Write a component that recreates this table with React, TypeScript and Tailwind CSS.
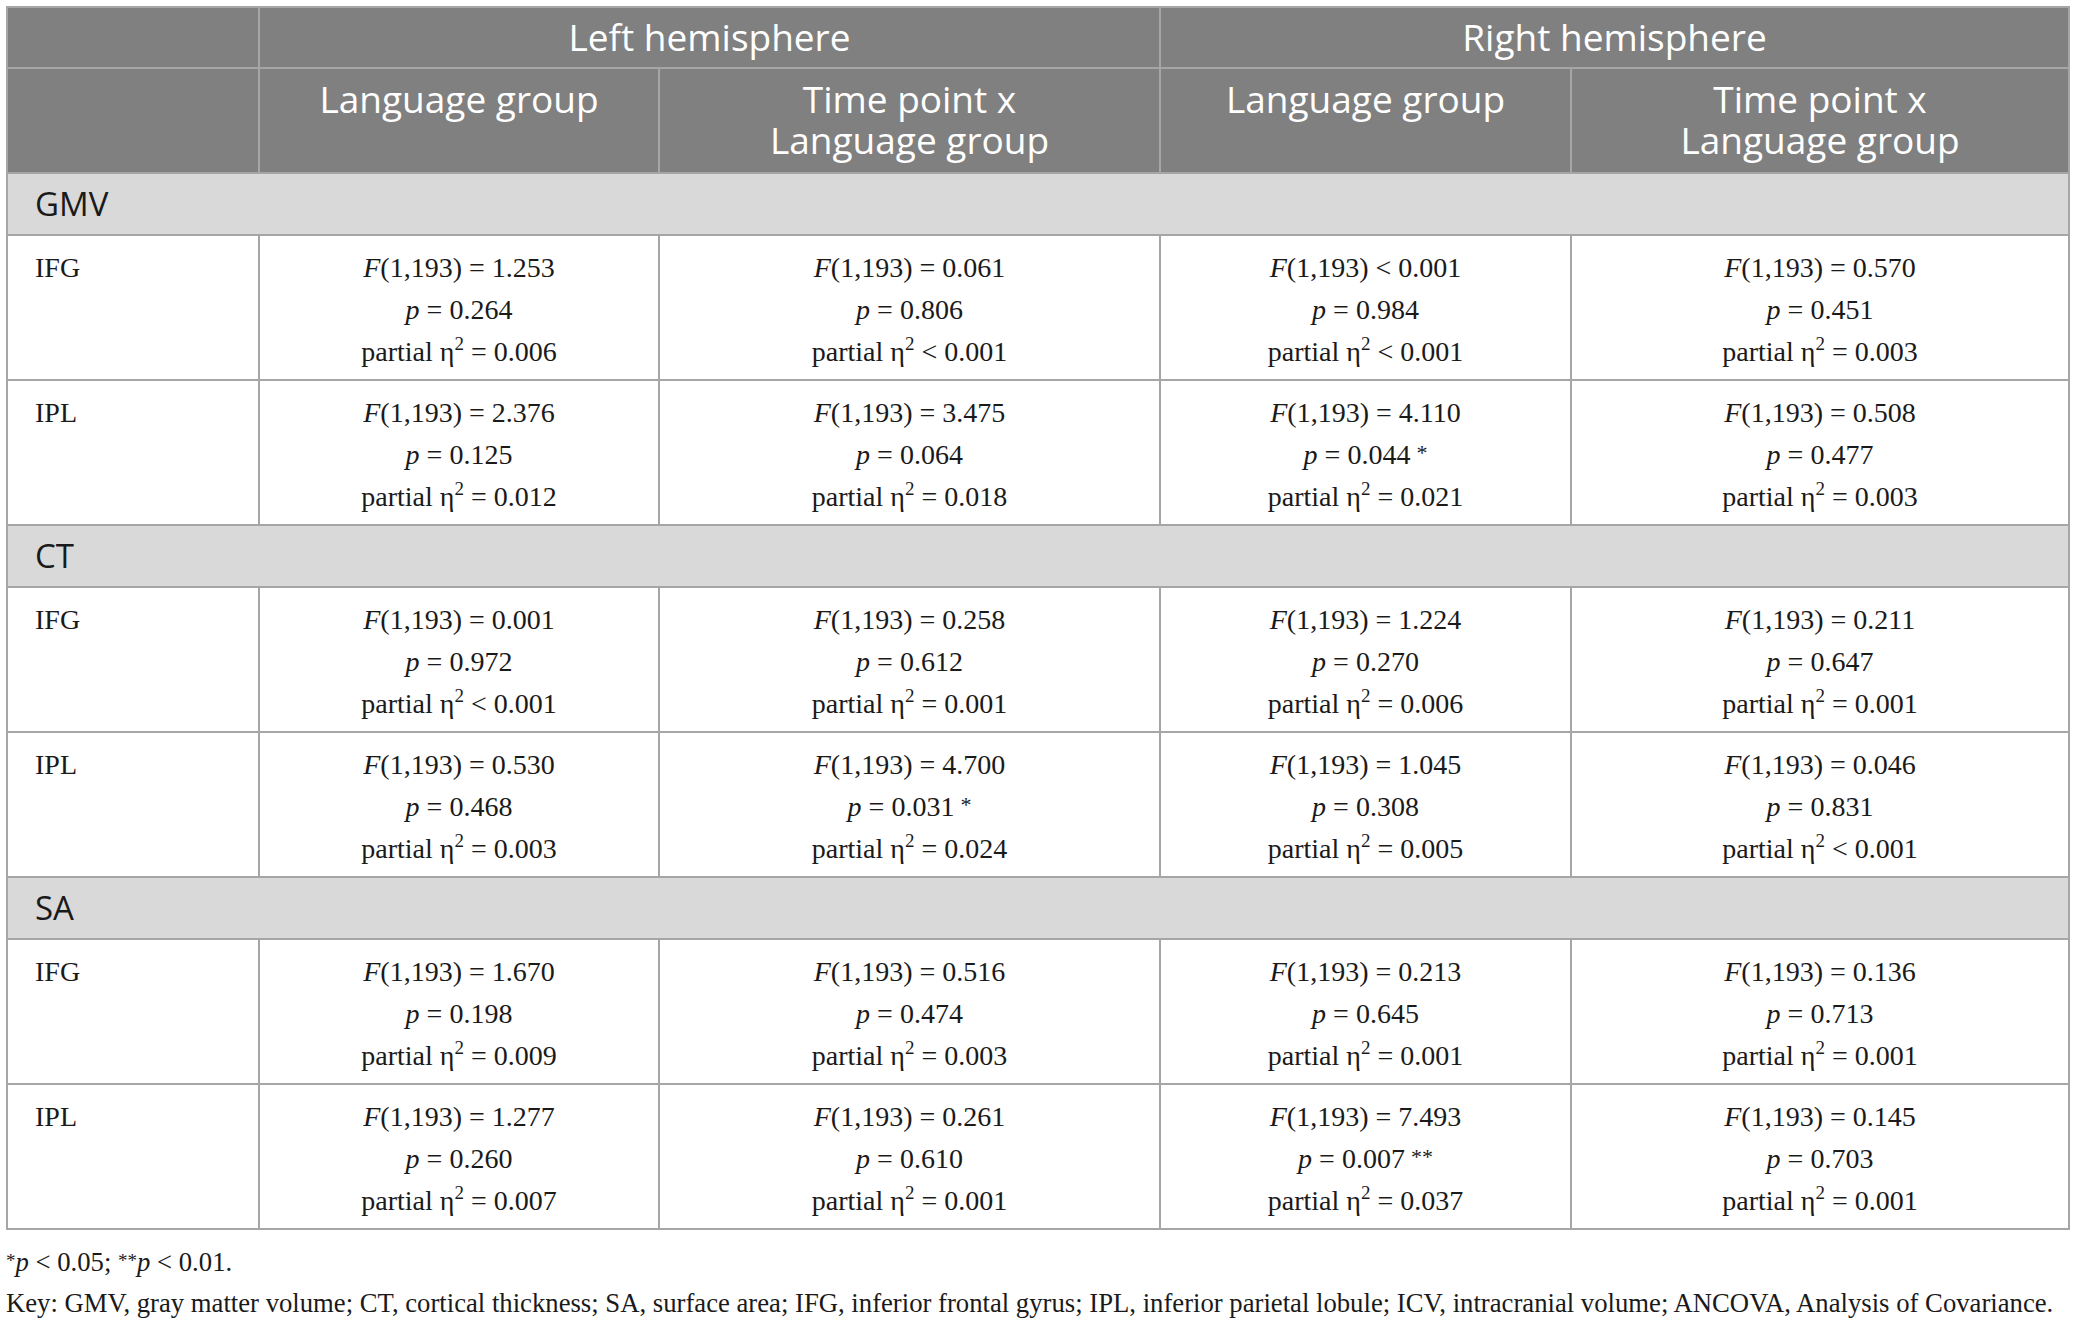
import React from "react";

type Cell = { f: string; p: string; sig?: string; eta: string };

interface Row {
  label: string;
  cells: Cell[];
}

interface Group {
  name: string;
  rows: Row[];
}

const c = (f: string, p: string, eta: string, sig?: string): Cell => ({ f, p, eta, sig });

const groups: Group[] = [
  {
    name: "GMV",
    rows: [
      {
        label: "IFG",
        cells: [
          c("= 1.253", "= 0.264", "= 0.006"),
          c("= 0.061", "= 0.806", "< 0.001"),
          c("< 0.001", "= 0.984", "< 0.001"),
          c("= 0.570", "= 0.451", "= 0.003"),
        ],
      },
      {
        label: "IPL",
        cells: [
          c("= 2.376", "= 0.125", "= 0.012"),
          c("= 3.475", "= 0.064", "= 0.018"),
          c("= 4.110", "= 0.044", "= 0.021", "*"),
          c("= 0.508", "= 0.477", "= 0.003"),
        ],
      },
    ],
  },
  {
    name: "CT",
    rows: [
      {
        label: "IFG",
        cells: [
          c("= 0.001", "= 0.972", "< 0.001"),
          c("= 0.258", "= 0.612", "= 0.001"),
          c("= 1.224", "= 0.270", "= 0.006"),
          c("= 0.211", "= 0.647", "= 0.001"),
        ],
      },
      {
        label: "IPL",
        cells: [
          c("= 0.530", "= 0.468", "= 0.003"),
          c("= 4.700", "= 0.031", "= 0.024", "*"),
          c("= 1.045", "= 0.308", "= 0.005"),
          c("= 0.046", "= 0.831", "< 0.001"),
        ],
      },
    ],
  },
  {
    name: "SA",
    rows: [
      {
        label: "IFG",
        cells: [
          c("= 1.670", "= 0.198", "= 0.009"),
          c("= 0.516", "= 0.474", "= 0.003"),
          c("= 0.213", "= 0.645", "= 0.001"),
          c("= 0.136", "= 0.713", "= 0.001"),
        ],
      },
      {
        label: "IPL",
        cells: [
          c("= 1.277", "= 0.260", "= 0.007"),
          c("= 0.261", "= 0.610", "= 0.001"),
          c("= 7.493", "= 0.007", "= 0.037", "**"),
          c("= 0.145", "= 0.703", "= 0.001"),
        ],
      },
    ],
  },
];

const sans = "font-['Open_Sans',sans-serif]";
const serif = "font-['Liberation_Serif',serif]";
const bd = "border-2 border-[#a6a6a6]";

function StatCell({ cell }: { cell: Cell }) {
  return (
    <td className={`${bd} text-center align-top pt-[11px] pb-0 text-[28px] leading-[42px] text-[#1a1a1a] ${serif}`}>
      <div className="h-[42px]">
        <i>F</i>(1,193) {cell.f}
      </div>
      <div className="h-[42px]">
        <i>p</i> {cell.p}
        {cell.sig && <span className="relative top-[-4px] ml-[6px] text-[22px]">{cell.sig}</span>}
      </div>
      <div className="h-[42px]">
        partial η<span className="relative top-[-11px] text-[19px]">2</span> {cell.eta}
      </div>
    </td>
  );
}

export default function App() {
  return (
    <div className="min-h-screen bg-white pl-[6px] pt-[6px]">
      <table className="table-fixed border-collapse w-[2062px]">
        <colgroup>
          <col className="w-[252px]" />
          <col className="w-[400px]" />
          <col className="w-[501px]" />
          <col className="w-[411px]" />
          <col className="w-[498px]" />
        </colgroup>
        <thead className={`bg-[#808080] text-white ${sans} text-[37px] leading-[41px]`}>
          <tr className="h-[61px]">
            <th className={`${bd} font-normal`} />
            <th colSpan={2} className={`${bd} font-normal pt-0 pb-[3px]`}>
              Left hemisphere
            </th>
            <th colSpan={2} className={`${bd} font-normal pt-0 pb-[3px]`}>
              Right hemisphere
            </th>
          </tr>
          <tr className="h-[105px]">
            <th className={`${bd} font-normal`} />
            <th className={`${bd} font-normal align-top pt-[9px]`}>Language group</th>
            <th className={`${bd} font-normal align-top pt-[9px]`}>
              Time point x
              <br />
              Language group
            </th>
            <th className={`${bd} font-normal align-top pt-[9px]`}>Language group</th>
            <th className={`${bd} font-normal align-top pt-[9px]`}>
              Time point x
              <br />
              Language group
            </th>
          </tr>
        </thead>
        <tbody>
          {groups.map((g) => (
            <React.Fragment key={g.name}>
              <tr className="h-[62px] bg-[#d9d9d9]">
                <td colSpan={5} className={`${bd} pl-[27px] py-0 text-[33px] leading-[40px] text-[#1a1a1a] ${sans}`}>
                  {g.name}
                </td>
              </tr>
              {g.rows.map((r) => (
                <tr key={g.name + r.label} className="h-[145px]">
                  <td className={`${bd} align-top pl-[27px] pt-[11px] text-[28px] leading-[42px] text-[#1a1a1a] ${serif}`}>
                    {r.label}
                  </td>
                  {r.cells.map((cell, i) => (
                    <StatCell key={i} cell={cell} />
                  ))}
                </tr>
              ))}
            </React.Fragment>
          ))}
        </tbody>
      </table>

      {/* Footnotes */}
      <div className={`mt-[13px] text-[26.7px] leading-[38px] text-[#1a1a1a] ${serif}`}>
        <p>
          <span className="relative top-[-4px] text-[19px]">*</span>
          <i>p</i> &lt; 0.05; <span className="relative top-[-4px] text-[19px]">**</span>
          <i>p</i> &lt; 0.01.
        </p>
        <p>
          Key: GMV, gray matter volume; CT, cortical thickness; SA, surface area; IFG, inferior frontal gyrus; IPL,
          inferior parietal lobule; ICV, intracranial volume; ANCOVA, Analysis of Covariance.
        </p>
      </div>
    </div>
  );
}
